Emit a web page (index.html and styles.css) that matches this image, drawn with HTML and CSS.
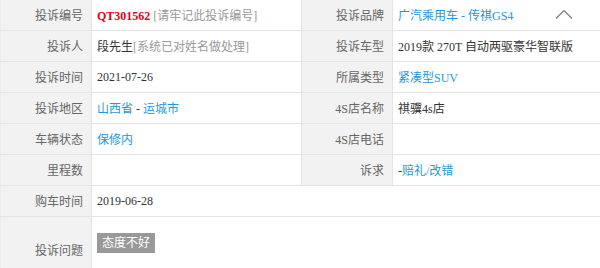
FILE: index.html
```html
<!DOCTYPE html>
<html lang="zh-CN">
<head>
<meta charset="utf-8">
<title>投诉详情</title>
<link rel="stylesheet" href="styles.css">
</head>
<body>
<table class="info">
  <colgroup>
    <col class="c-label"><col class="c-val-l"><col class="c-label"><col>
  </colgroup>
  <tr>
    <th>投诉编号</th>
    <td><b class="code">QT301562</b> <span class="muted">[请牢记此投诉编号]</span></td>
    <th>投诉品牌</th>
    <td class="brand"><span class="link">广汽乘用车 - 传祺GS4</span>
      <svg class="chev" width="18" height="10" viewBox="0 0 18 10"><path d="M1 9.5 L9 1.5 L17 9.5" fill="none" stroke="#777" stroke-width="1.1"/></svg>
    </td>
  </tr>
  <tr>
    <th>投诉人</th>
    <td>段先生<span class="muted">[系统已对姓名做处理]</span></td>
    <th>投诉车型</th>
    <td>2019款 270T 自动两驱豪华智联版</td>
  </tr>
  <tr>
    <th>投诉时间</th>
    <td>2021-07-26</td>
    <th>所属类型</th>
    <td><span class="link">紧凑型SUV</span></td>
  </tr>
  <tr>
    <th>投诉地区</th>
    <td><span class="link">山西省</span> - <span class="link">运城市</span></td>
    <th>4S店名称</th>
    <td>祺骥4s店</td>
  </tr>
  <tr>
    <th>车辆状态</th>
    <td><span class="link">保修内</span></td>
    <th>4S店电话</th>
    <td></td>
  </tr>
  <tr>
    <th>里程数</th>
    <td></td>
    <th>诉求</th>
    <td>-<span class="link">赔礼/改错</span></td>
  </tr>
  <tr>
    <th>购车时间</th>
    <td colspan="3">2019-06-28</td>
  </tr>
  <tr class="tall">
    <th>投诉问题</th>
    <td colspan="3"><span class="tag">态度不好</span></td>
  </tr>
</table>
</body>
</html>
```
FILE: styles.css
```css
html, body {
  margin: 0;
  padding: 0;
  background: #fff;
}
body {
  font-family: "Liberation Serif", "Noto Sans CJK SC", serif;
  font-size: 12px;
  color: #333;
}
.info {
  width: 600px;
  border-collapse: collapse;
  table-layout: fixed;
}
.c-label { width: 91px; }
.c-val-l { width: 210px; }
.info th,
.info td {
  height: 30px;
  padding: 0;
  border-bottom: 1px solid #e4e4e4;
  vertical-align: middle;
  white-space: nowrap;
}
.info th {
  background: #f2f2f2;
  color: #666;
  font-weight: normal;
  text-align: right;
  padding-right: 8px;
  border-left: 1px solid #e4e4e4;
  border-right: 1px solid #e4e4e4;
}
.info tr:first-child th,
.info tr:first-child td { border-top: 0; }
.info tr:first-child th:first-child,
.info th:first-child { border-left: 1px solid #ececec; }
.info td {
  padding-left: 5px;
}
.info .tall th,
.info .tall td { height: 50px; }
.info .tall th { padding-top: 8px; }
.code {
  color: #e60012;
  font-weight: bold;
}
.muted { color: #999; }
.link { color: #1a9ae0; }
.brand { position: relative; }
.chev {
  position: absolute;
  right: 27px;
  top: 9px;
}
.tag {
  display: inline-block;
  background: #999;
  color: #fff;
  padding: 0 5px;
  line-height: 20px;
  margin-top: -7px;
  vertical-align: middle;
}
```
